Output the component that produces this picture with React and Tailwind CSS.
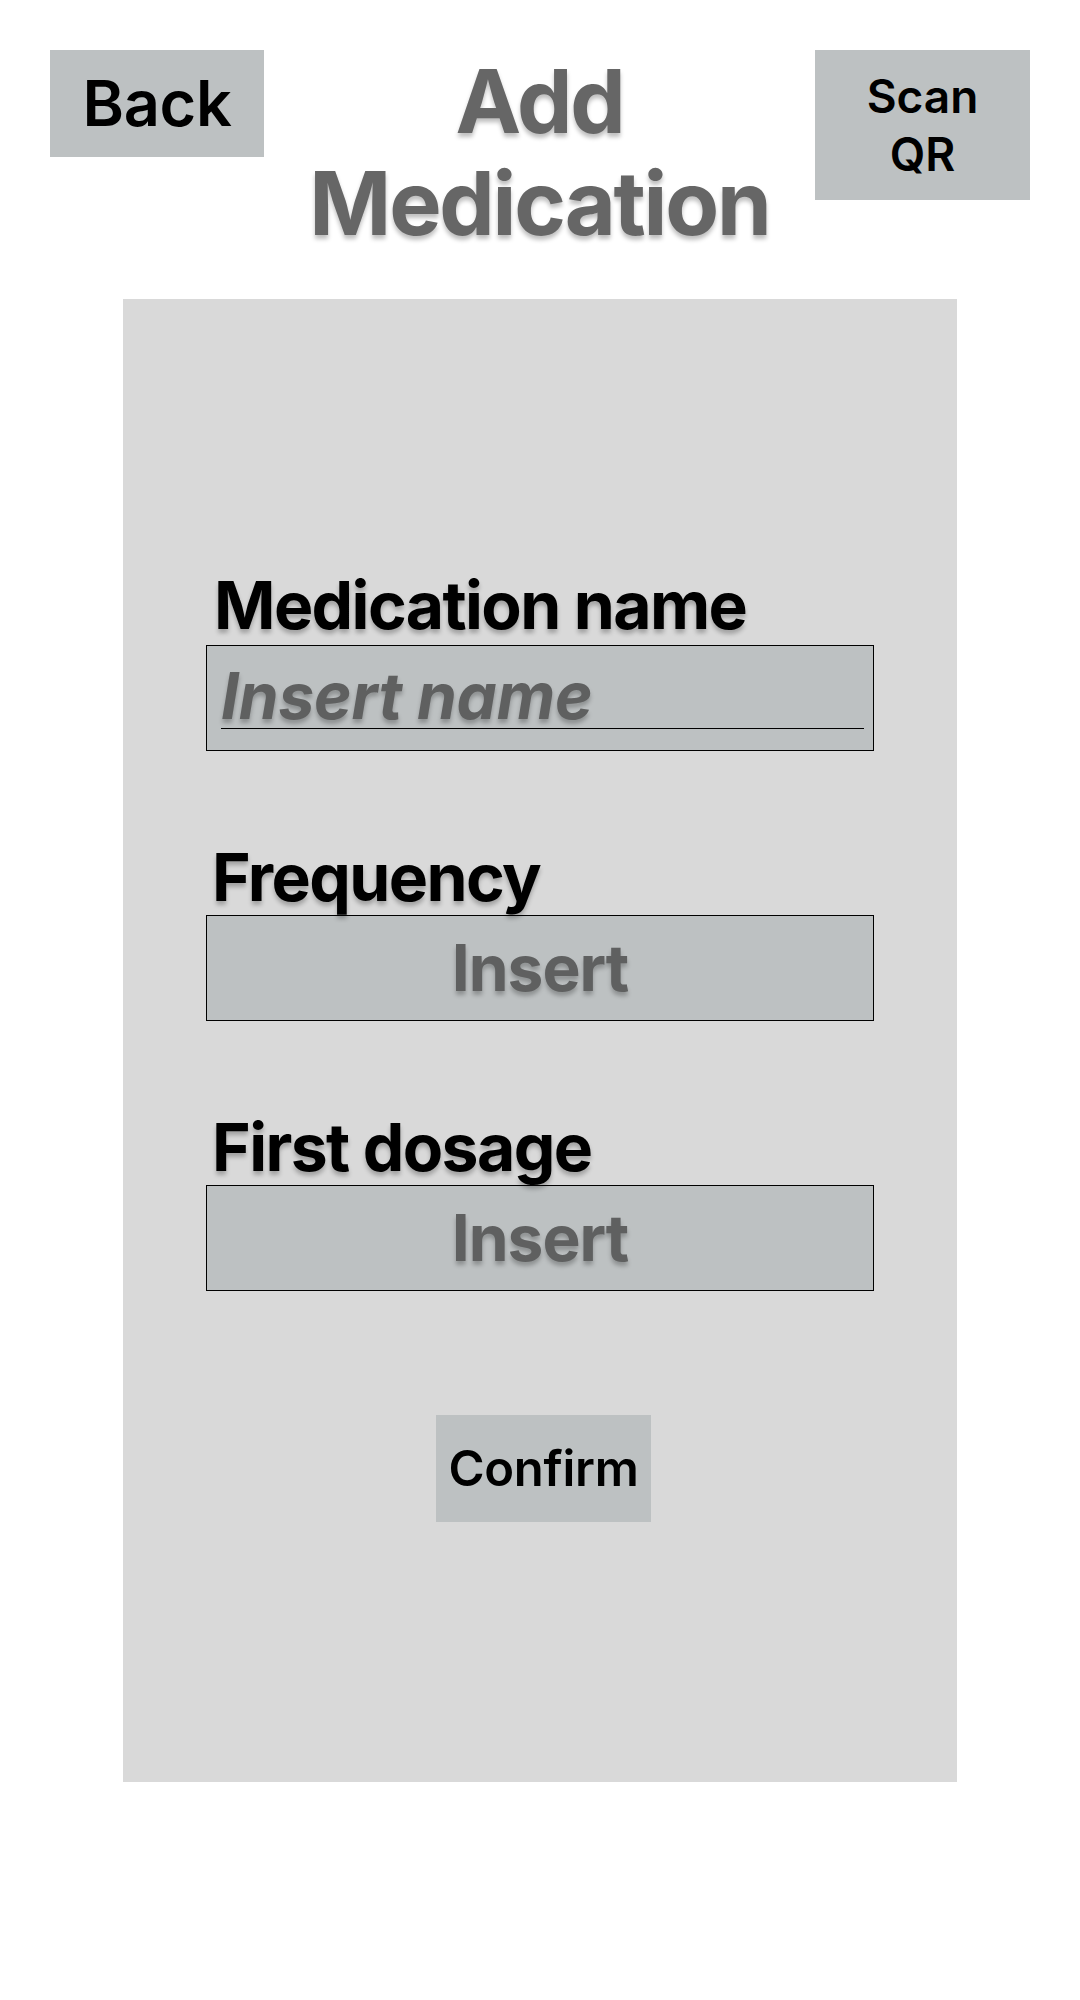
export default function App() {
  const font = { fontFamily: 'Inter, "Noto Sans", sans-serif' };
  return (
    <div style={font} className="w-[1080px] h-[2000px] bg-white relative">
      <div className="flex items-start justify-between pl-[50px] pr-[50px] pt-[50px]">
        <button className="w-[214px] h-[107px] bg-[#bdc1c2] flex items-center justify-center text-[63px] leading-none font-semibold tracking-[-0.3px] text-black">
          Back
        </button>
        <h1 className="flex-1 text-center text-[88px] leading-[102px] font-bold tracking-[-2.2px] text-[#666666] [text-shadow:0_4px_4px_rgba(0,0,0,0.25)]">
          Add
          <br />
          Medication
        </h1>
        <button className="w-[215px] h-[150px] bg-[#bdc1c2] flex items-center justify-center text-center text-[46px] leading-[58px] font-semibold text-black">
          Scan
          <br />
          QR
        </button>
      </div>

      <div className="ml-[123px] mt-[45px] w-[834px] h-[1483px] bg-[#d9d9d9] flex flex-col">
        <div className="pl-[83px] pt-[273px]">
          <div className="pl-[8px] text-[66px] leading-[66px] font-bold text-black tracking-[-1.6px] [text-shadow:0_4px_4px_rgba(0,0,0,0.25)]">
            Medication name
          </div>
          <div className="mt-[7px] w-[668px] h-[106px] border border-black bg-[#bdc1c2]">
            <div className="ml-[14px] mr-[9px] mt-[18px] h-[65px] border-b border-black text-[64px] leading-[63px] italic font-bold text-[#5f6060] tracking-[-0.2px] [text-shadow:0_4px_4px_rgba(0,0,0,0.25)]">
              Insert name
            </div>
          </div>

          <div className="mt-[93px] pl-[6px] text-[66px] leading-[66px] font-bold text-black tracking-[-1.6px] [text-shadow:0_4px_4px_rgba(0,0,0,0.25)]">
            Frequency
          </div>
          <div className="mt-[5px] w-[668px] h-[106px] border border-black bg-[#bdc1c2] flex items-center justify-center text-[64px] leading-none font-bold text-[#5f6060] tracking-[-1px] [text-shadow:0_4px_4px_rgba(0,0,0,0.25)]">
            Insert
          </div>

          <div className="mt-[93px] pl-[6px] text-[66px] leading-[66px] font-bold text-black tracking-[-1.6px] [text-shadow:0_4px_4px_rgba(0,0,0,0.25)]">
            First dosage
          </div>
          <div className="mt-[5px] w-[668px] h-[106px] border border-black bg-[#bdc1c2] flex items-center justify-center text-[64px] leading-none font-bold text-[#5f6060] tracking-[-1px] [text-shadow:0_4px_4px_rgba(0,0,0,0.25)]">
            Insert
          </div>
        </div>

        <button className="mt-[124px] ml-[313px] w-[215px] h-[107px] bg-[#bdc1c2] flex items-center justify-center text-[49px] leading-none font-semibold tracking-[-0.3px] text-black">
          Confirm
        </button>
      </div>
    </div>
  );
}
